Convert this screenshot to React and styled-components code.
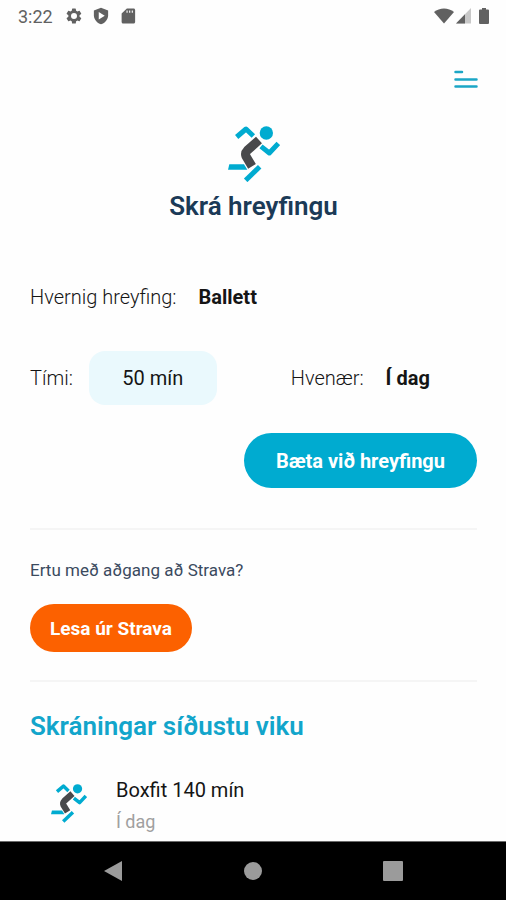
import { useState } from "react"
import styled, { createGlobalStyle } from "styled-components"

const mainColor = "#00abd0"
const headingColor = "#1b3a57"
const stravaColor = "#fc6100"
const statusColor = "#616161"

export default function App() {
    const [time, setTime] = useState("50 mín")

    return (
        <>
            <GlobalStyle />
            <Screen>
                <StatusBar />
                <Content>
                    <TopBar>
                        <MenuButton type="button" aria-label="Valmynd">
                            <svg width="24" height="18" viewBox="0 0 24 18" stroke="#1ba6c6" strokeWidth="2.5" strokeLinecap="round">
                                <path d="M2.500 2H9M2.500 9.500H23.500M2.500 16.500H23.500" />
                            </svg>
                        </MenuButton>
                    </TopBar>
                    <Header>
                        <Runner width={52} />
                        <Title>Skrá hreyfingu</Title>
                    </Header>
                    <form onSubmit={(e) => e.preventDefault()}>
                        <Field>
                            <Label htmlFor="exercise">Hvernig hreyfing:</Label>
                            <Select id="exercise">
                                <option>Ballett</option>
                                <option>Boxfit</option>
                            </Select>
                        </Field>
                        <FieldRow>
                            <Field $gap="16px">
                                <Label htmlFor="time">Tími:</Label>
                                <TimeInput id="time" value={time} onChange={(e) => setTime(e.target.value)} />
                            </Field>
                            <Field>
                                <Label htmlFor="day">Hvenær:</Label>
                                <Select id="day">
                                    <option>Í dag</option>
                                    <option>Í gær</option>
                                </Select>
                            </Field>
                        </FieldRow>
                        <Actions>
                            <SubmitButton type="submit">Bæta við hreyfingu</SubmitButton>
                        </Actions>
                    </form>
                    <Strava>
                        <p>Ertu með aðgang að Strava?</p>
                        <StravaButton type="button">Lesa úr Strava</StravaButton>
                    </Strava>
                    <ListTitle>Skráningar síðustu viku</ListTitle>
                    <List>
                        <Entry name="Boxfit 140 mín" day="Í dag" />
                    </List>
                </Content>
                <NavigationBar />
            </Screen>
        </>
    )
}

function StatusBar() {
    return (
        <StatusContainer>
            <span>3:22</span>
            <StatusIcons $gap="9px">
                <svg width="18" height="18" viewBox="0 0 24 24" fill={statusColor}>
                    <path fillRule="evenodd" d="M19.4 13a7.500 7.500 0 0 0 0-2l2.100-1.600a.5.5 0 0 0 .1-.6l-2-3.500a.5.5 0 0 0-.6-.2l-2.500 1a7.300 7.300 0 0 0-1.700-1l-.4-2.600a.5.5 0 0 0-.5-.5h-4a.5.5 0 0 0-.5.5L9 5.100a7.700 7.700 0 0 0-1.700 1l-2.500-1a.5.5 0 0 0-.6.2l-2 3.500a.5.5 0 0 0 .1.600L4.500 11a8 8 0 0 0 0 2l-2.200 1.600a.5.5 0 0 0-.1.600l2 3.500c.1.200.4.300.6.200l2.500-1a7.300 7.300 0 0 0 1.700 1l.4 2.600c0 .3.200.5.5.5h4c.3 0 .5-.2.5-.5l.4-2.600a7.700 7.700 0 0 0 1.700-1l2.500 1c.2.100.5 0 .6-.2l2-3.500a.5.5 0 0 0-.1-.6L19.400 13ZM12 16a4 4 0 1 1 0-8 4 4 0 0 1 0 8Z" />
                </svg>
                <svg width="18" height="18" viewBox="0 0 24 24">
                    <path d="M12 1 2.500 4.500V11c0 5.500 4 10.400 9.500 12 5.500-1.600 9.500-6.500 9.500-12V4.500Z" fill={statusColor} />
                    <path d="M9 6.500v10l8-5Z" fill="#fff" />
                </svg>
                <svg width="18" height="18" viewBox="0 0 24 24" fill={statusColor}>
                    <path fillRule="evenodd" d="M19.500 2h-9L3.500 8.500V20c0 1.100.9 2 2 2h14c1.100 0 2-.9 2-2V4c0-1.100-.9-2-2-2ZM10 4.500H11.500v3H10ZM13.500 4.500H15v3h-1.500ZM17 4.500H18.500v3H17Z" />
                </svg>
            </StatusIcons>
            <StatusIcons $right>
                <svg width="20" height="16" viewBox="0 0 20 16" fill={statusColor}>
                    <path d="M0 4C5.500-.8 14.500-.8 20 4L10 15.500Z" />
                </svg>
                <svg width="16" height="16" viewBox="0 0 16 16">
                    <path d="M0 15.500 15 0V15.500Z" fill="#c8c8c8" />
                    <path d="M0 15.500 9 6.200V15.500Z" fill={statusColor} />
                </svg>
                <svg width="20" height="16" viewBox="0 0 20 16" fill={statusColor}>
                    <path d="M8 0h4v1.500h2q1 0 1 1V15q0 1-1 1H6q-1 0-1-1V2.500q0-1 1-1h2Z" />
                </svg>
            </StatusIcons>
        </StatusContainer>
    )
}

function Runner({ width }) {
    return (
        <RunnerSvg $width={width} viewBox="36 34 156 168" fill="none" aria-hidden="true">
            <g stroke={mainColor} strokeWidth="15">
                <path d="M62 67 90 43 112 64" strokeLinejoin="round" />
                <path d="M135 95 160 115 187 86" strokeLinejoin="round" />
                <path d="M89 197 131 156" />
            </g>
            <path d="M40 149H84L94 165H36Z" fill={mainColor} />
            <circle cx="151" cy="55" r="20" fill={mainColor} />
            <path d="M129 76 94 107Q86 115 90 125L108 155" stroke="#48494b" strokeWidth="27" />
        </RunnerSvg>
    )
}

function Entry({ name, day }) {
    return (
        <EntryContainer>
            <Runner width={36} />
            <div>
                <EntryName>{name}</EntryName>
                <EntryDay>{day}</EntryDay>
            </div>
        </EntryContainer>
    )
}

function NavigationBar() {
    return (
        <Nav>
            <NavButton type="button" aria-label="Til baka">
                <svg width="20" height="22" viewBox="0 0 20 22" fill="#9b9b9b">
                    <path d="M19 1v20L1 11Z" />
                </svg>
            </NavButton>
            <NavButton type="button" aria-label="Heim">
                <svg width="20" height="20" viewBox="0 0 20 20" fill="#9b9b9b">
                    <circle cx="10" cy="10" r="9" />
                </svg>
            </NavButton>
            <NavButton type="button" aria-label="Yfirlit">
                <svg width="20" height="20" viewBox="0 0 20 20" fill="#9b9b9b">
                    <rect width="20" height="20" rx="1" />
                </svg>
            </NavButton>
        </Nav>
    )
}

const GlobalStyle = createGlobalStyle`
    * {
        box-sizing: border-box;
    }
    body {
        margin: 0;
        background-color: #fefefe;
        font-family: Roboto, sans-serif;
        color: #151515;
    }
    button, input, select {
        border: none;
        padding: 0;
        background: none;
        font-family: inherit;
        color: inherit;
    }
    h1, h2, p, ul {
        margin: 0;
        padding: 0;
    }
`
const Screen = styled.div`
    display: flex;
    flex-direction: column;
    height: 100vh;
`
const StatusContainer = styled.div`
    display: flex;
    flex-shrink: 0;
    align-items: center;
    height: 32px;
    padding: 0 12px 0 18px;
    font-size: 18px;
    color: ${statusColor};
`
const StatusIcons = styled.div`
    display: flex;
    align-items: center;
    gap: ${({ $gap }) => $gap || "2px"};
    margin-left: ${({ $right }) => ($right ? "auto" : "12px")};
`
const Content = styled.main`
    flex: 1;
    min-height: 0;
    overflow: hidden;
    padding: 38px 29px 0 30px;
`
const TopBar = styled.div`
    display: flex;
    justify-content: flex-end;
`
const MenuButton = styled.button`
    display: flex;
    & svg {
        overflow: visible;
    }
`
const Header = styled.header`
    display: flex;
    flex-direction: column;
    align-items: center;
    gap: 8px;
    margin: 38px 0 57px;
`
const RunnerSvg = styled.svg`
    flex-shrink: 0;
    width: ${({ $width }) => $width}px;
`
const Title = styled.h1`
    font-size: 26px;
    line-height: 32px;
    font-weight: 600;
    color: ${headingColor};
`
const Field = styled.div`
    display: flex;
    align-items: center;
    gap: ${({ $gap }) => $gap || "22px"};
`
const FieldRow = styled.div`
    display: grid;
    grid-template-columns: 7fr 5fr;
    margin: 36px 0 28px;
`
const Label = styled.label`
    font-size: 20px;
    font-weight: 300;
    white-space: nowrap;
`
const Select = styled.select`
    appearance: none;
    height: 36px;
    font-size: 20px;
    font-weight: 700;
`
const TimeInput = styled.input`
    width: 128px;
    height: 54px;
    border-radius: 16px;
    background-color: #eaf9fd;
    font-size: 20px;
    text-align: center;
`
const Actions = styled.div`
    display: flex;
    justify-content: flex-end;
`
const PillButton = styled.button`
    border-radius: 28px;
    font-weight: 700;
    color: #fff;
`
const SubmitButton = styled(PillButton)`
    height: 55px;
    padding: 0 32px;
    font-size: 20px;
    background-color: ${mainColor};
`
const StravaButton = styled(PillButton)`
    height: 48px;
    padding: 0 20px;
    font-size: 19px;
    background-color: ${stravaColor};
`
const Strava = styled.section`
    margin-top: 40px;
    padding: 28px 0;
    border: solid #f5f5f5;
    border-width: 2px 0;
    & p {
        margin-bottom: 22px;
        font-size: 17px;
        line-height: 24px;
        color: #3b4a5e;
    }
`
const ListTitle = styled.h2`
    margin: 28px 0 32px;
    font-size: 26px;
    line-height: 32px;
    font-weight: 600;
    color: #12a5cb;
`
const List = styled.ul`
    list-style: none;
`
const EntryContainer = styled.li`
    display: flex;
    align-items: flex-start;
    gap: 29px;
    padding-left: 21px;
    & svg {
        margin-top: 10px;
    }
`
const EntryName = styled.p`
    font-size: 20px;
    line-height: 32px;
`
const EntryDay = styled.p`
    font-size: 18px;
    line-height: 32px;
    color: #a0a0a0;
`
const Nav = styled.nav`
    display: flex;
    flex-shrink: 0;
    justify-content: center;
    height: 59px;
    border-top: 1px solid #6b6b6b;
    background-color: #000;
`
const NavButton = styled.button`
    display: flex;
    align-items: center;
    justify-content: center;
    width: 140px;
`
